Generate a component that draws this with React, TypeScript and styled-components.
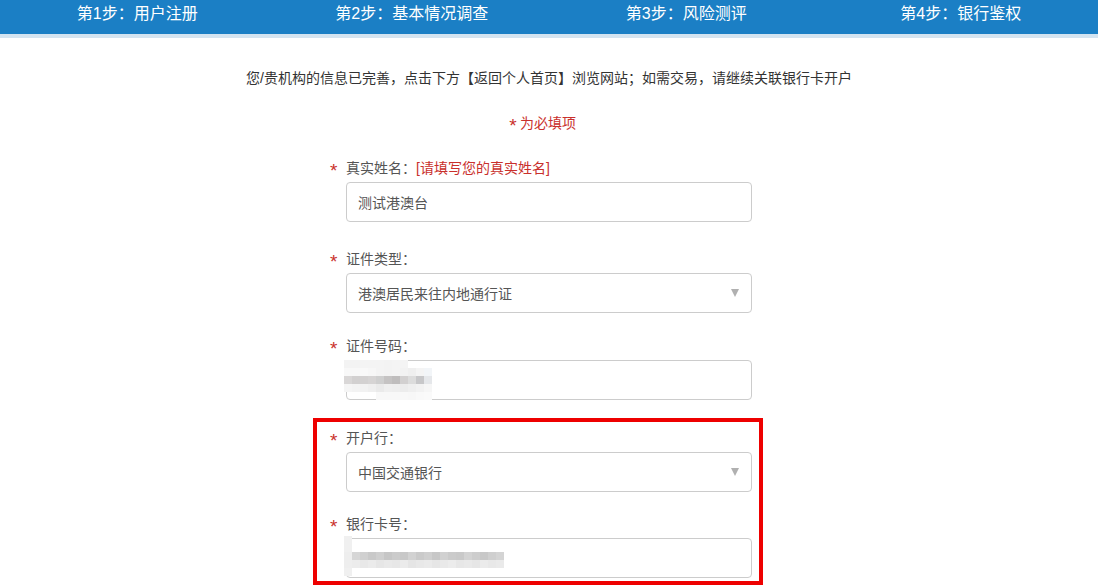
import * as React from 'react';
import styled, { createGlobalStyle } from 'styled-components';

const GlobalStyle = createGlobalStyle`
  html, body {
    margin: 0;
    padding: 0;
    background: #fff;
    overflow: hidden;
  }
  body {
    font-family: "Liberation Sans", "Noto Sans CJK SC", sans-serif;
  }
`;

const STEPS = ['第1步：用户注册', '第2步：基本情况调查', '第3步：风险测评', '第4步：银行鉴权'];

// mosaic cells used to blur the personal numbers
const ID_MOSAIC = [
  ['#f3f3f3', '#f3f3f3', '#f4f4f4', '#f4f4f4', '#f4f4f4', '#f3f3f3', '#f4f4f4', '#f4f4f4', '', '', ''],
  ['#f8f8f8', '#f8f8f8', '#f9f9f9', '#f7f7f7', '#f4f4f4', '#f3f3f3', '#f4f4f4', '#f2f2f2', '#efefef', '#f4f4f4', '#f2f5f8'],
  ['#d9d7d7', '#d2d0d0', '#d3d1d1', '#d6d4d4', '#cfcfcf', '#c5c3c3', '#bfbdbd', '#d2d0d0', '#dcdcdc', '#c7c7c9', '#e5e7ea'],
  ['#f5f5f5', '#f3f3f3', '#f2f2f2', '#efefef', '#eaeaea', '#efefef', '#eeeeee', '#ececec', '#efefef', '#f2f2f2', '#f6f6f6'],
  ['', '', '', '', '#f8f8f8', '#f8f8f8', '#f8f8f8', '#f8f8f8', '#f7f7f7', '#f9f9f9', '#fafafa']
];

const cardGray = [
  '#eeeeee', '#d6d6d6', '#d0d0d0', '#c9c9c9', '#cfcfcf', '#c6c6c6', '#cbcbcb', '#c8c8c8', '#d2d2d2', '#cacaca',
  '#cfcfcf', '#c7c7c7', '#d1d1d1', '#cbcbcb', '#c9c9c9', '#d3d3d3', '#cdcdcd', '#c8c8c8', '#cfcfcf', '#d4d4d4'
];
const cardLight = [
  '#eeeeee', '#ececec', '#e8e8e8', '#ebebeb', '#e6e6e6', '#e9e9e9', '#e7e7e7', '#ebebeb', '#e5e5e5', '#e8e8e8',
  '#eaeaea', '#e6e6e6', '#e9e9e9', '#ececec', '#e7e7e7', '#e9e9e9', '#e6e6e6', '#ebebeb', '#e8e8e8', '#eaeaea'
];
const CARD_MOSAIC = [
  ['#f0f0f0', ...Array(19).fill('')],
  ['#f0f0f0', ...Array(19).fill('')],
  cardGray,
  cardLight,
  ['#f0f0f0', ...Array(19).fill('')]
];

const Page = styled.div`
  width: 100%;
`;

const StepBar = styled.div`
  display: grid;
  grid-template-columns: repeat(4, 1fr);
  height: 34px;
  background: #1b7fc5;
  border-bottom: 4px solid #d3e4f1;
`;

const Step = styled.div`
  color: #fff;
  font-size: 16px;
  line-height: 18px;
  padding-top: 5px;
  text-align: center;
`;

const Intro = styled.p`
  margin: 30px 0 0;
  font-size: 14px;
  line-height: 20px;
  color: #333;
  text-align: center;
`;

const Form = styled.div`
  width: 422px;
  padding-right: 16px;
  margin: 0 auto;
  display: flex;
  flex-direction: column;
`;

const RequiredNote = styled.p`
  margin: 25px 0 0;
  font-size: 14px;
  line-height: 20px;
  color: #c9302c;
  text-align: center;
`;

const Group = styled.div<{ $top: number }>`
  display: flex;
  flex-direction: column;
  margin-top: ${({ $top }) => $top}px;
`;

const Label = styled.div`
  display: flex;
  align-items: center;
  height: 20px;
  font-size: 14px;
  color: #555;
`;

const Star = styled.span<{ $w?: number }>`
  display: inline-block;
  width: ${({ $w }) => $w ?? 16}px;
  color: #c9302c;
  font-size: 19px;
  line-height: 14px;
  transform: translateY(4px);
`;

const Hint = styled.span`
  color: #c9302c;
`;

const Field = styled.div`
  position: relative;
  box-sizing: border-box;
  margin: 5px 0 0 16px;
  height: 40px;
  border: 1px solid #ccc;
  border-radius: 4px;
  padding: 0 12px 0 11px;
  display: flex;
  align-items: center;
  justify-content: space-between;
  font-size: 14px;
  color: #555;
  background: #fff;
`;

const Caret = styled.span`
  width: 0;
  height: 0;
  border-left: 4px solid transparent;
  border-right: 4px solid transparent;
  border-top: 8px solid #b0b0b0;
`;

const Highlight = styled.div`
  margin: 18px -11px 0 -17px;
  border: 4px solid #ee0000;
  padding: 5px 7px 3px 13px;
`;

const MosaicGrid = styled.div<{ $cols: number; $left: number; $top: number }>`
  position: absolute;
  left: ${({ $left }) => $left}px;
  top: ${({ $top }) => $top}px;
  display: grid;
  grid-template-columns: repeat(${({ $cols }) => $cols}, 8px);
  grid-auto-rows: 8px;
`;

const Cell = styled.span<{ $c: string }>`
  background: ${({ $c }) => $c || 'transparent'};
`;

const Mosaic: React.FC<{ cells: string[][]; left: number; top: number }> = ({ cells, left, top }) => (
  <MosaicGrid $cols={cells[0].length} $left={left} $top={top}>
    {cells.flatMap((row, r) => row.map((c, i) => <Cell key={`${r}-${i}`} $c={c} />))}
  </MosaicGrid>
);

interface FormFieldProps {
  label: string;
  hint?: string;
  top: number;
  select?: boolean;
  value?: string;
  children?: React.ReactNode;
}

const FormField: React.FC<FormFieldProps> = ({ label, hint, top, select, value, children }) => (
  <Group $top={top}>
    <Label>
      <Star>*</Star>
      {label}
      {hint && <Hint>{hint}</Hint>}
    </Label>
    <Field>
      <span>{value}</span>
      {select && <Caret />}
      {children}
    </Field>
  </Group>
);

const App: React.FC = () => (
  <Page>
    <GlobalStyle />
    <StepBar>
      {STEPS.map((s) => (
        <Step key={s}>{s}</Step>
      ))}
    </StepBar>
    <Intro>您/贵机构的信息已完善，点击下方【返回个人首页】浏览网站；如需交易，请继续关联银行卡开户</Intro>
    <Form>
      <RequiredNote>
        <Star $w={14}>*</Star>为必填项
      </RequiredNote>
      <FormField label="真实姓名：" hint="[请填写您的真实姓名]" top={24} value="测试港澳台" />
      <FormField label="证件类型：" top={26} select value="港澳居民来往内地通行证" />
      <FormField label="证件号码：" top={22}>
        <Mosaic cells={ID_MOSAIC} left={-3} top={-1} />
      </FormField>
      <Highlight>
        <FormField label="开户行：" top={0} select value="中国交通银行" />
        <FormField label="银行卡号：" top={21}>
          <Mosaic cells={CARD_MOSAIC} left={-3} top={-3} />
        </FormField>
      </Highlight>
    </Form>
  </Page>
);

export default App;
